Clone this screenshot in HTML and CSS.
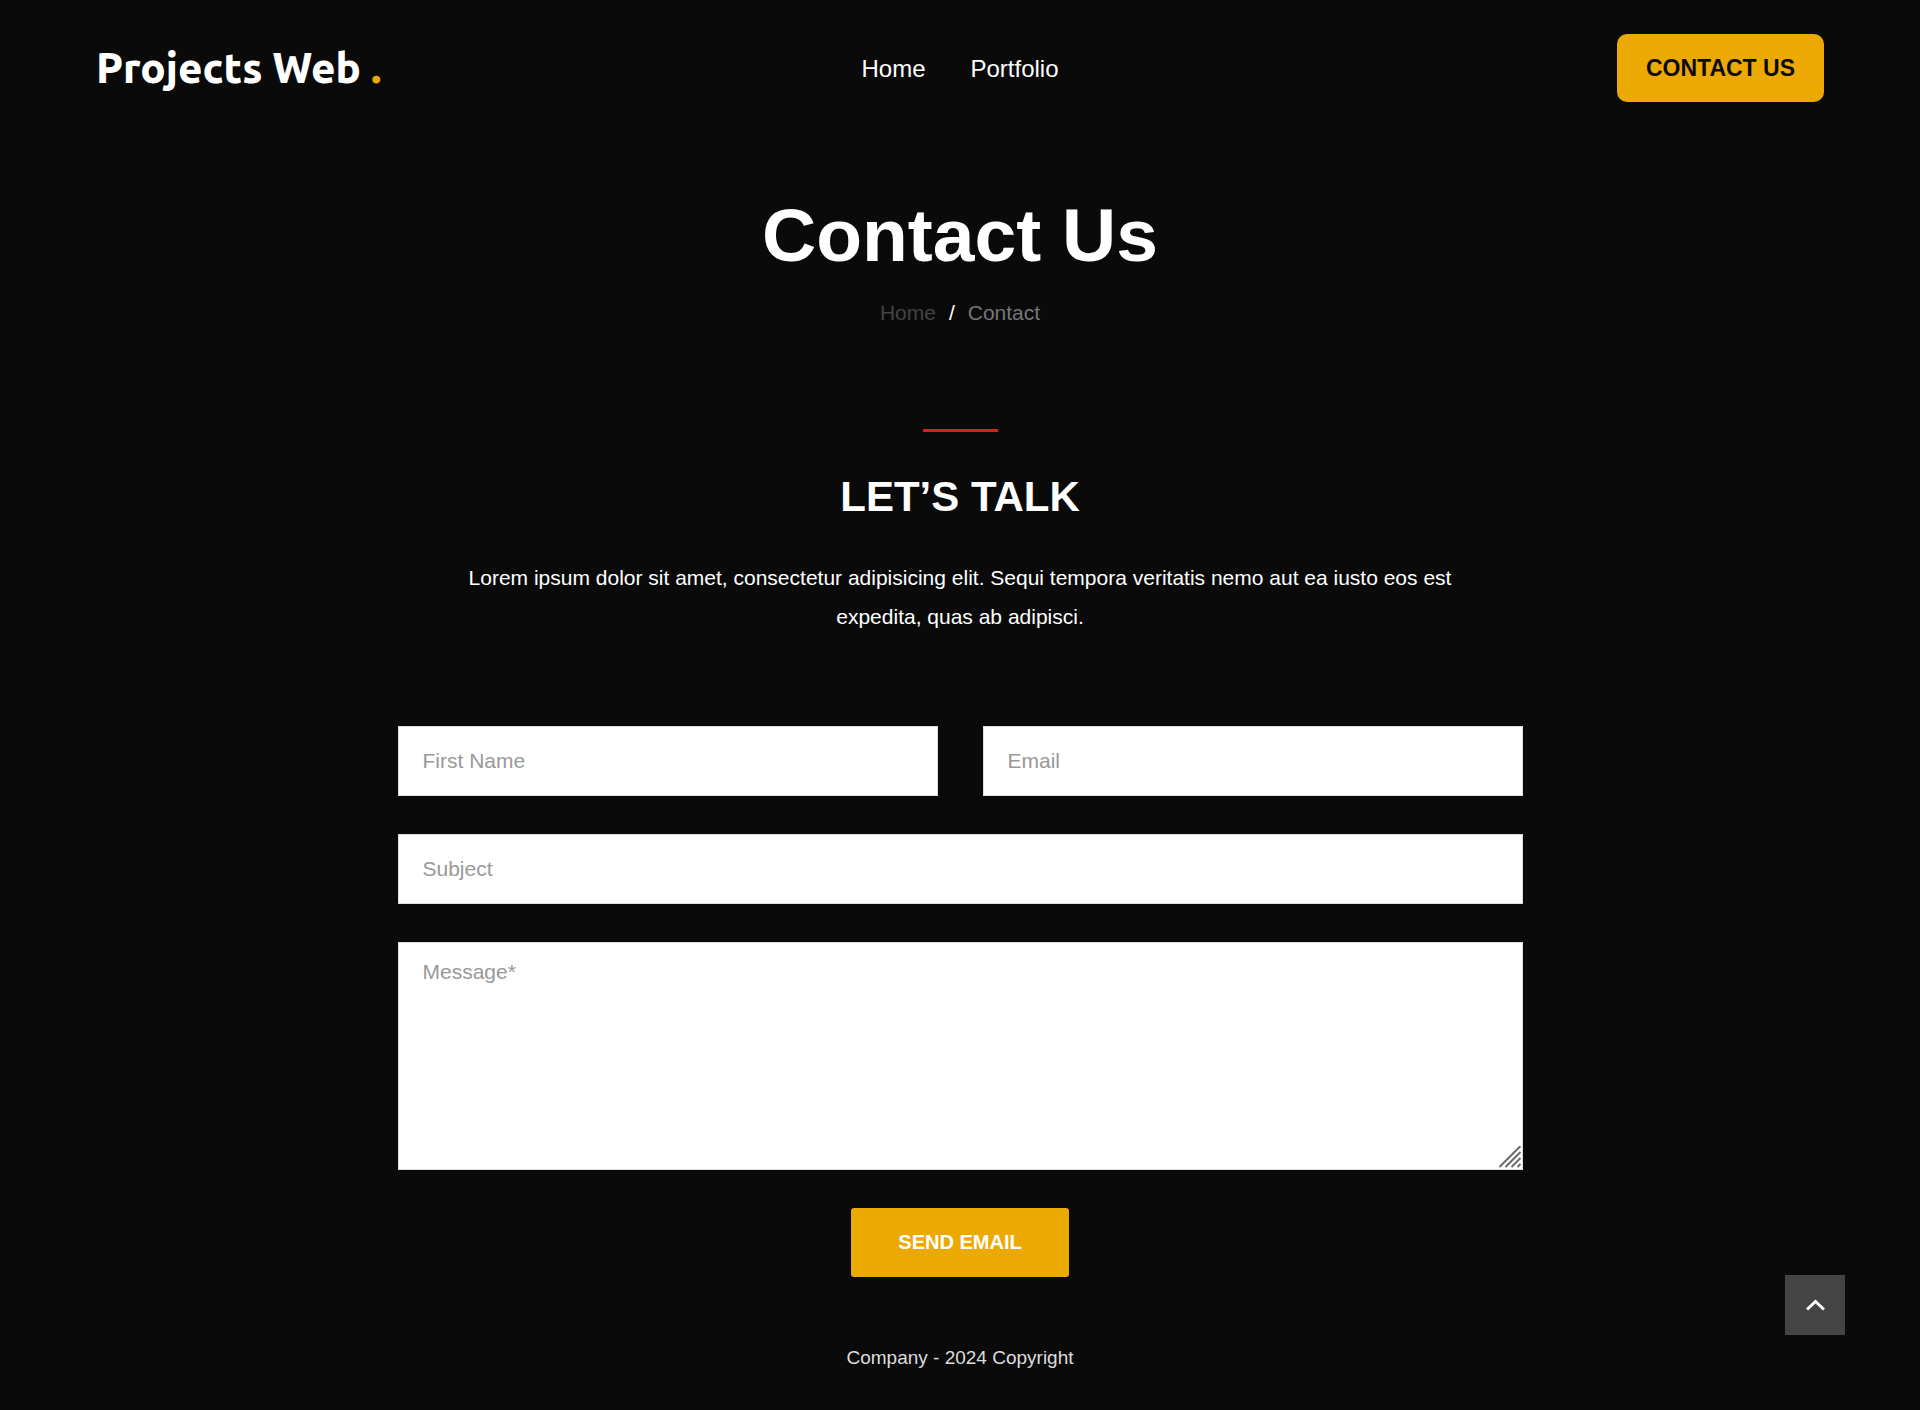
FILE: index.html
```html
<!DOCTYPE html>
<html lang="en">
<head>
<meta charset="utf-8">
<meta name="viewport" content="width=device-width, initial-scale=1">
<title>Contact Us - Projects Web</title>
<link rel="stylesheet" href="styles.css">
</head>
<body>
<header class="site-header">
  <a class="logo" href="#">Projects Web <span class="logo-dot">.</span></a>
  <nav class="nav">
    <a href="#">Home</a>
    <a href="#">Portfolio</a>
  </nav>
  <div class="header-action"><a class="contact-button" href="#contact">CONTACT US</a></div>
</header>
<main>
  <section class="page-title">
    <h1>Contact Us</h1>
    <nav class="breadcrumb" aria-label="Breadcrumb">
      <a href="#">Home</a>
      <span class="separator">/</span>
      <span class="current">Contact</span>
    </nav>
  </section>
  <section class="talk" id="contact">
    <div class="rule"></div>
    <h2>LET’S TALK</h2>
    <p>Lorem ipsum dolor sit amet, consectetur adipisicing elit. Sequi tempora veritatis nemo aut ea iusto eos est expedita, quas ab adipisci.</p>
  </section>
  <form class="contact-form">
    <input class="field" type="text" aria-label="First Name" placeholder="First Name">
    <input class="field" type="email" aria-label="Email" placeholder="Email">
    <input class="field wide" type="text" aria-label="Subject" placeholder="Subject">
    <div class="message wide">
      <textarea class="field" aria-label="Message" placeholder="Message*"></textarea>
      <svg class="grip" width="24" height="24" viewBox="0 0 24 24" aria-hidden="true"><path d="M0.5 21 21.500 0M6.5 21 21.500 6M12.500 21 21.500 12M18.500 21 21.500 18" fill="none" stroke="#6b6b6b" stroke-width="2"/></svg>
    </div>
    <button class="send wide" type="button">SEND EMAIL</button>
  </form>
</main>
<footer class="site-footer">Company - 2024 Copyright</footer>
<button class="to-top" type="button" aria-label="Back to top">
  <svg width="20" height="12" viewBox="0 0 20 12" aria-hidden="true"><path d="M2 10.500 10.500 2.500 19 10.500" fill="none" stroke="#fff" stroke-width="3"/></svg>
</button>
</body>
</html>
```

FILE: styles.css
```css
* { box-sizing: border-box; }
body {
  margin: 0;
  background: #0a0a0a;
  color: #fff;
  font-family: "Liberation Sans", Arial, sans-serif;
  font-size: 21px;
}
a { color: inherit; text-decoration: none; }
h1, h2, p { margin: 0; }

.site-header {
  display: grid;
  grid-template-columns: 1fr auto 1fr;
  align-items: center;
  padding: 34px 96px;
}
.logo {
  font-family: Ubuntu, "Noto Sans", sans-serif;
  font-size: 42px;
  font-weight: 800;
  line-height: 68px;
}
.logo-dot { color: #eca904; }
.nav { display: flex; gap: 45px; padding-top: 2px; font-size: 24px; }
.header-action { display: flex; justify-content: flex-end; }
.contact-button {
  padding: 0 29px;
  border-radius: 10px;
  background: #eca904;
  color: #0a0a0a;
  font-size: 23px;
  font-weight: 700;
  line-height: 68px;
}

.page-title { padding: 55px 24px 0; text-align: center; }
h1 { font-size: 75px; line-height: 88px; }
.breadcrumb {
  display: flex;
  justify-content: center;
  gap: 13px;
  padding-top: 21px;
  line-height: 26px;
}
.breadcrumb a { color: #444; }
.current { color: #777; }

.talk {
  display: flex;
  flex-direction: column;
  align-items: center;
  padding: 103px 24px 0;
  text-align: center;
}
.rule { width: 75px; height: 3px; background: #e21a1a; }
h2 { padding-top: 39px; font-size: 42px; line-height: 52px; }
p { max-width: 1020px; padding-top: 35px; line-height: 39px; }

.contact-form {
  display: grid;
  grid-template-columns: 1fr 1fr;
  gap: 38px 45px;
  max-width: 1125px;
  margin: 0 auto;
  padding-top: 90px;
}
.wide { grid-column: 1 / -1; }
.field {
  display: block;
  width: 100%;
  height: 70px;
  padding: 0 24px;
  border: 1px solid #ddd;
  border-radius: 0;
  background: #fff;
  color: #222;
  font: inherit;
}
.field::placeholder { color: #999; }
.message { position: relative; }
textarea.field {
  height: 228px;
  padding-top: 15px;
  line-height: 28px;
  resize: none;
}
.grip { position: absolute; right: 0; bottom: 0; }
.send {
  justify-self: center;
  padding: 0 47px;
  border: 0;
  border-radius: 3px;
  background: #eca904;
  color: #fff;
  font: inherit;
  font-size: 20px;
  font-weight: 700;
  line-height: 69px;
}

.site-footer {
  padding: 67px 24px 37px;
  color: #ddd;
  font-size: 19px;
  line-height: 28px;
  text-align: center;
}
.to-top {
  position: fixed;
  right: 75px;
  bottom: 75px;
  display: grid;
  place-items: center;
  width: 60px;
  height: 60px;
  padding: 0;
  border: 0;
  background: #444;
}
```
